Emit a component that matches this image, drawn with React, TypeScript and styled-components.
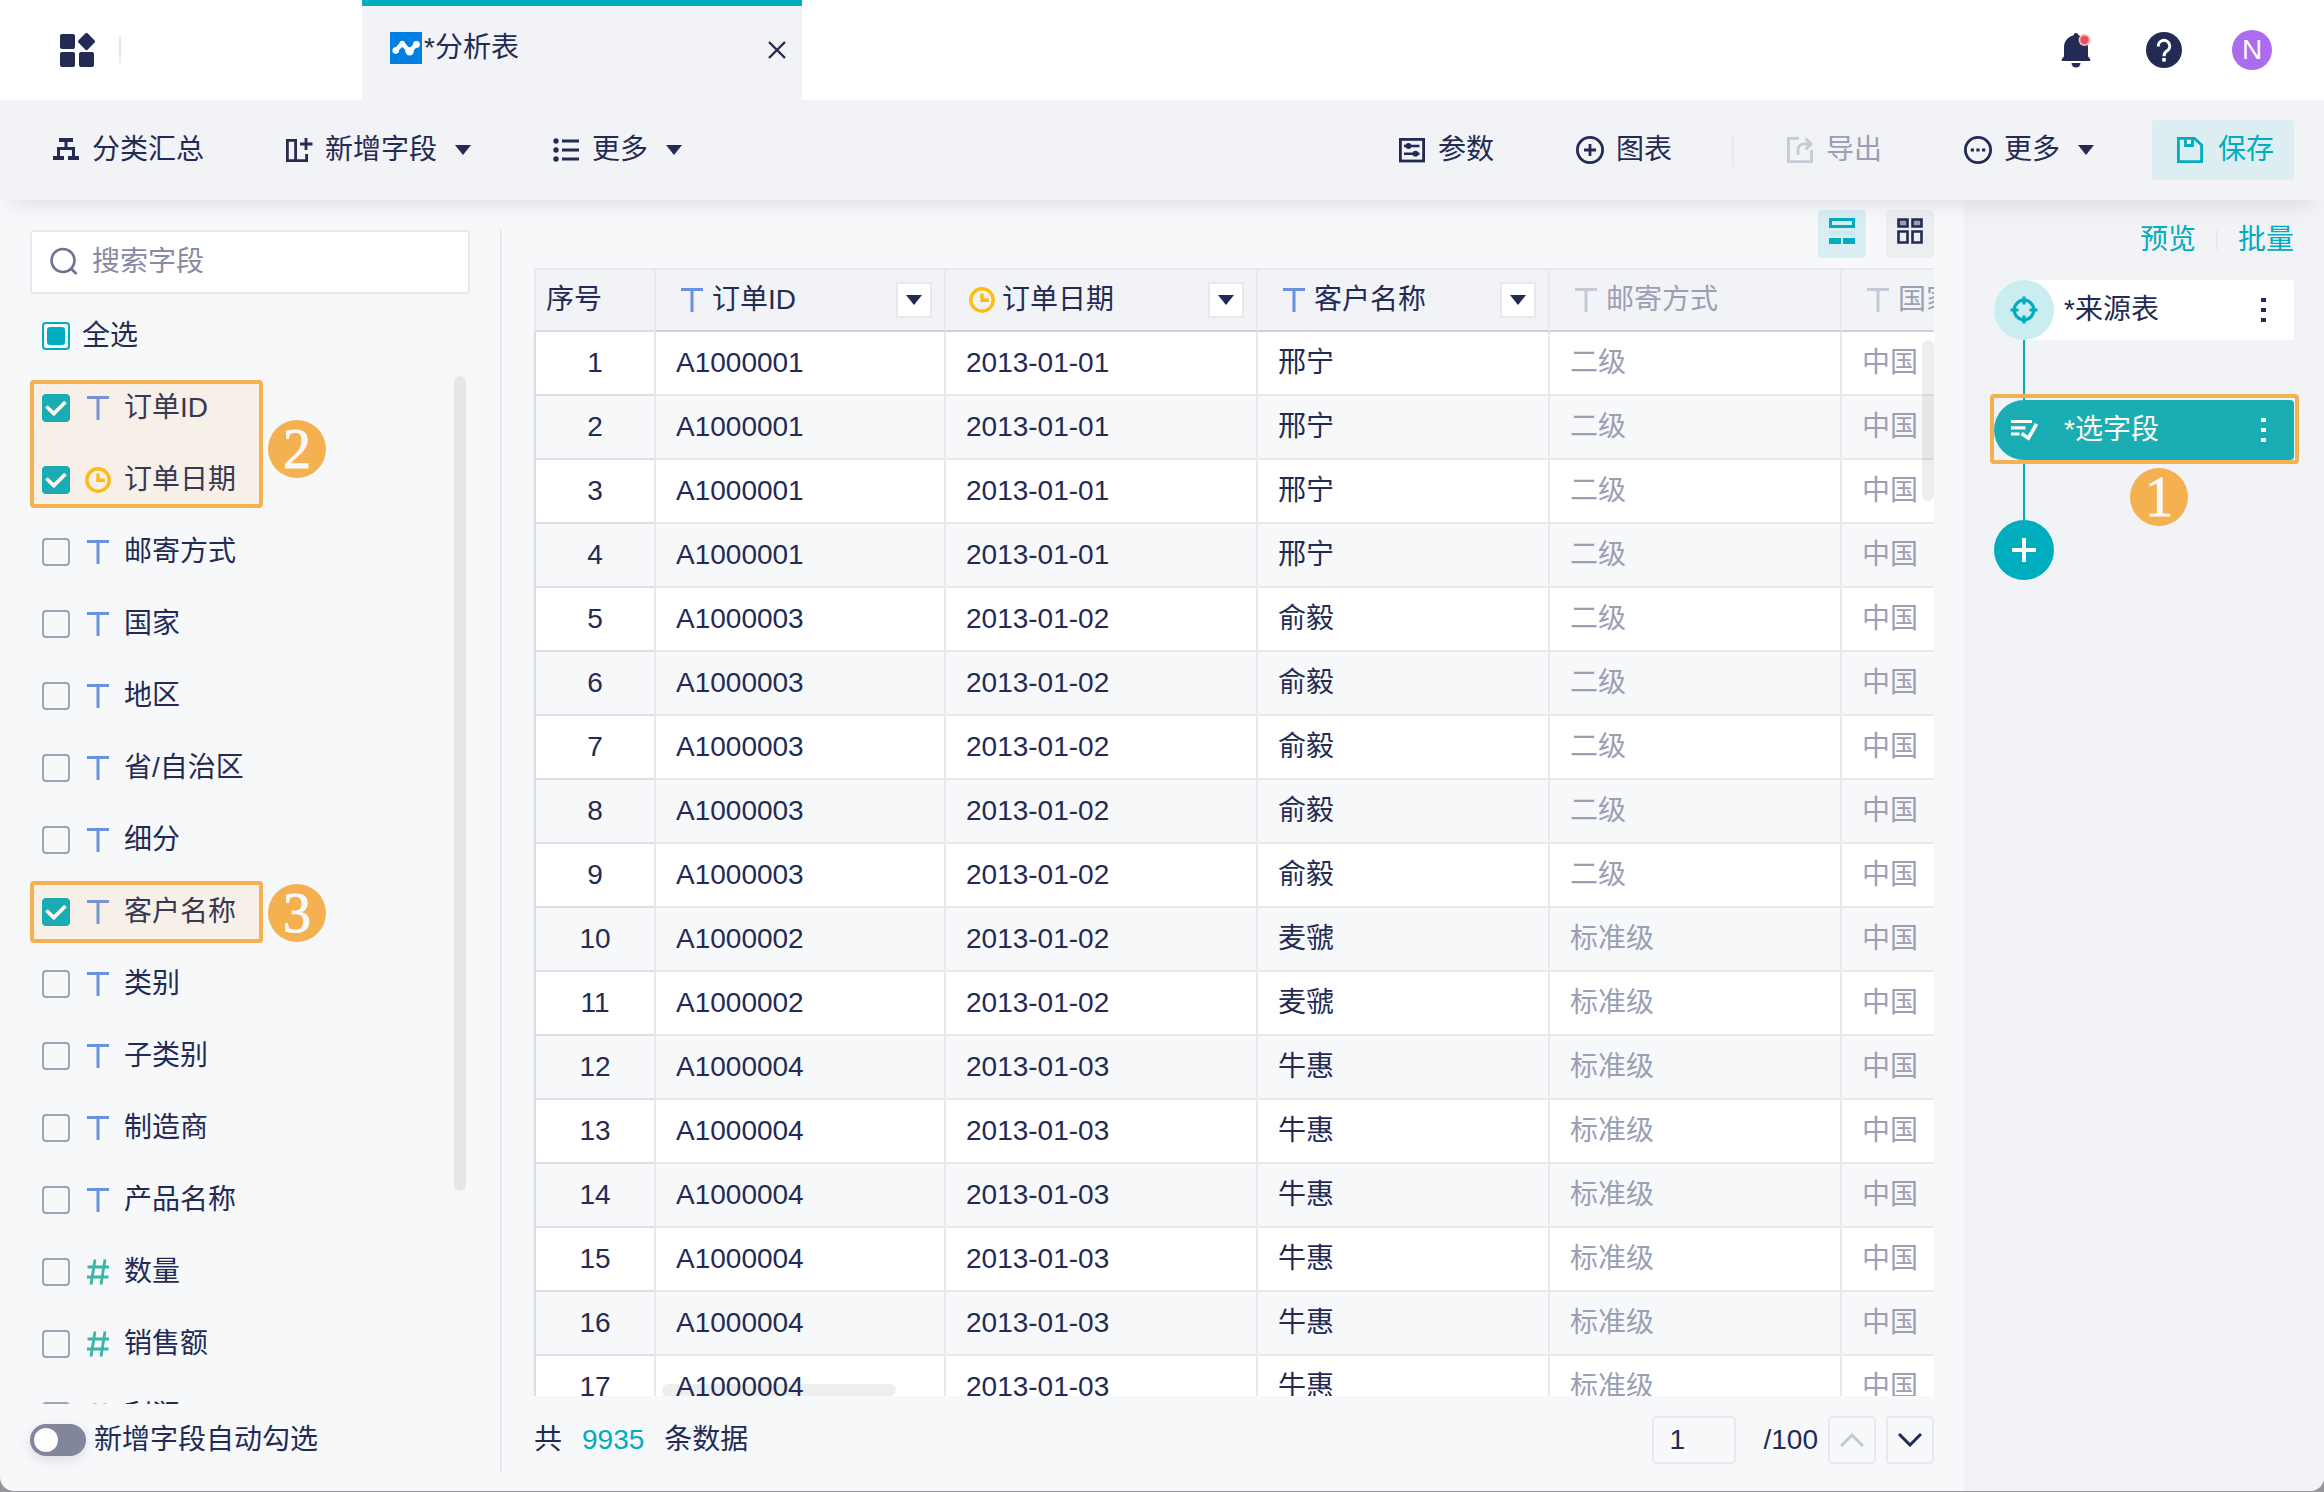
import React, { useEffect, useRef } from "react";
import styled, { createGlobalStyle, css } from "styled-components";

const color = {
  ink: "#232b54",
  muted: "#9b9fb3",
  faint: "#c6c9d6",
  teal: "#00adbf",
  tealMarked: "#1aaeb4",
  line: "#e8e9ed",
  lineIndex: "#dcdee6",
  lineHead: "#cfd1da",
  page: "#f7f8fa",
  panel: "#f2f3f7",
  blue: "#6a90e0",
  green: "#38b5a6",
  yellow: "#fdbd10",
  mark: "#f5b04f",
};

const GlobalStyle = createGlobalStyle`
  *, *::before, *::after { box-sizing: border-box; }
  html, body { margin: 0; background: #949699; }
  body, button, input, table {
    font-family: "Liberation Sans", "Noto Sans CJK SC", sans-serif;
    font-size: 28px;
    line-height: 40px;
    color: ${color.ink};
  }
  button { margin: 0; padding: 0; border: 0; background: none; cursor: pointer; }
  svg { display: block; flex: none; }
`;

const Window = styled.div`
  display: flex;
  flex-direction: column;
  height: calc(100vh - 1px);
  overflow: hidden;
  border-radius: 0 0 14px 14px;
  background: ${color.page};
`;

/* ---------- header ---------- */

const Header = styled.header`
  display: flex;
  flex: none;
  height: 100px;
  background: #fff;
`;

const HeaderStart = styled.div`
  display: flex;
  align-items: center;
  gap: 23px;
  width: 362px;
  padding-left: 60px;
`;

const Rule = styled.span<{ $height: number }>`
  flex: none;
  width: 2px;
  height: ${(p) => p.$height}px;
  background: ${color.line};
`;

const Tab = styled.div`
  display: flex;
  align-items: center;
  justify-content: space-between;
  width: 440px;
  padding: 0 16px 0 28px;
  background: ${color.panel};
  box-shadow: inset 0 6px 0 ${color.teal};
`;

const TabTitle = styled.div`
  display: flex;
  align-items: center;
  gap: 2px;
  padding-bottom: 4px;
`;

const HeaderEnd = styled.div`
  display: flex;
  align-items: center;
  gap: 48px;
  margin-left: auto;
  padding-right: 52px;
`;

const RoundButton = styled.button<{ $fill?: string }>`
  display: grid;
  place-items: center;
  width: 40px;
  height: 40px;
  border-radius: 50%;
  background: ${(p) => p.$fill ?? "transparent"};
  color: #fff;
`;

/* ---------- toolbar ---------- */

const Toolbar = styled.div`
  position: relative;
  z-index: 2;
  display: flex;
  flex: none;
  align-items: center;
  justify-content: space-between;
  height: 100px;
  padding: 0 30px 0 52px;
  background: ${color.panel};
  box-shadow: 0 12px 24px -12px rgba(35, 43, 84, 0.16);
`;

const ToolGroup = styled.div<{ $gap: number }>`
  display: flex;
  align-items: center;
  gap: ${(p) => p.$gap}px;
`;

const ToolbarEnd = styled.div`
  display: flex;
  align-items: center;
`;

const ToolButton = styled.button`
  display: flex;
  align-items: center;
  gap: 12px;
  white-space: nowrap;
  &:disabled { color: ${color.muted}; }
`;

const SaveButton = styled(ToolButton)`
  height: 60px;
  margin-left: 58px;
  padding: 0 20px 0 24px;
  gap: 14px;
  border-radius: 4px;
  background: #ddeef3;
  color: ${color.teal};
`;

const ToolRule = styled(Rule)`
  margin: 0 52px 0 60px;
`;

const Caret = styled.span<{ $lead?: boolean }>`
  width: 0;
  height: 0;
  margin-left: ${(p) => (p.$lead ? 6 : 0)}px;
  border: solid transparent;
  border-width: 10px 8px 0;
  border-top-color: ${color.ink};
`;

/* ---------- body ---------- */

const Body = styled.div`
  display: flex;
  flex: 1;
  min-height: 0;
`;

const Sidebar = styled.aside`
  display: flex;
  flex: none;
  flex-direction: column;
  width: 500px;
  padding: 30px 0 15px;
`;

const Search = styled.label`
  display: flex;
  flex: none;
  align-items: center;
  gap: 12px;
  height: 64px;
  margin: 0 30px;
  padding: 0 18px;
  border: 2px solid ${color.line};
  border-radius: 4px;
  background: #fff;
`;

const SearchInput = styled.input`
  flex: 1;
  min-width: 0;
  padding: 0;
  border: 0;
  outline: 0;
  background: none;
  &::placeholder { color: #868ba3; opacity: 1; }
`;

const FieldRow = styled.label`
  display: flex;
  flex: none;
  align-items: center;
  height: 72px;
  padding-left: 42px;
  white-space: nowrap;
`;

const SelectAllRow = styled(FieldRow)`
  gap: 12px;
  margin-top: 6px;
`;

const FieldName = styled.span`
  margin-left: 12px;
`;

const TypeSlot = styled.span`
  display: grid;
  place-items: center;
  flex: none;
  width: 28px;
  height: 28px;
`;

const RowTypeSlot = styled(TypeSlot)`
  margin-left: 14px;
`;

const TickWrap = styled.span`
  display: grid;
  flex: none;
  & > * { grid-area: 1 / 1; }
  & > svg { pointer-events: none; }
`;

const Tick = styled.input`
  appearance: none;
  width: 28px;
  height: 28px;
  margin: 0;
  border: 2px solid #9ea4b5;
  border-radius: 4px;
  &:checked { border-color: ${color.teal}; background: ${color.teal}; }
  &:indeterminate { border-color: ${color.teal}; background: none; }
`;

const FieldList = styled.div`
  position: relative;
  flex: 1;
  min-height: 0;
  overflow: hidden;
`;

const MarkedRows = styled.div<{ $inset: number }>`
  position: relative;
  &::after {
    content: "";
    position: absolute;
    left: 30px;
    width: 233px;
    top: ${(p) => p.$inset}px;
    bottom: ${(p) => p.$inset}px;
    border: 4px solid ${color.mark};
    border-radius: 4px;
    background: rgba(245, 176, 79, 0.1);
    pointer-events: none;
  }
`;

const Badge = styled.span`
  position: absolute;
  display: grid;
  place-items: center;
  width: 58px;
  height: 58px;
  border-radius: 50%;
  background: ${color.mark};
  color: ${color.page};
  font-family: "Liberation Serif", serif;
  font-size: 56px;
  line-height: 58px;
  -webkit-text-stroke: 1px ${color.page};
`;

const ListBadge = styled(Badge)<{ $top: number }>`
  left: 268px;
  top: ${(p) => p.$top}px;
`;

const NodeBadge = styled(Badge)`
  left: 136px;
  top: 68px;
`;

const Thumb = styled.span`
  position: absolute;
  border-radius: 6px;
  background: rgba(30, 34, 40, 0.08);
`;

const ListThumb = styled(Thumb)`
  top: 4px;
  right: 34px;
  width: 12px;
  height: 79%;
`;

const AutoRow = styled.label`
  display: flex;
  flex: none;
  align-items: center;
  gap: 8px;
  height: 72px;
  padding-left: 30px;
`;

const Switch = styled.input`
  appearance: none;
  display: flex;
  align-items: center;
  width: 56px;
  height: 32px;
  margin: 0;
  padding: 4px;
  border-radius: 16px;
  background: #82869d;
  box-shadow: 0 4px 12px rgba(35, 43, 84, 0.12);
  &::before {
    content: "";
    width: 24px;
    height: 24px;
    border-radius: 50%;
    background: #fff;
  }
`;

const SideRule = styled.span`
  flex: none;
  width: 2px;
  margin: 30px 0 18px;
  background: ${color.line};
`;

/* ---------- table ---------- */

const Main = styled.main`
  display: flex;
  flex: 1;
  flex-direction: column;
  min-width: 0;
  padding: 10px 30px 27px 32px;
`;

const ViewBar = styled.div`
  display: flex;
  flex: none;
  justify-content: flex-end;
  gap: 20px;
  margin-bottom: 10px;
`;

const ViewButton = styled.button<{ $on?: boolean }>`
  display: flex;
  justify-content: center;
  width: 48px;
  height: 48px;
  padding-top: 8px;
  border-radius: 4px;
  background: ${(p) => (p.$on ? "#d9eef3" : "#edeef2")};
`;

const TableArea = styled.div`
  position: relative;
  flex: 1;
  min-height: 0;
  overflow: hidden;
`;

const Table = styled.table`
  width: 1600px;
  table-layout: fixed;
  border-collapse: separate;
  border-spacing: 0;
`;

const cell = css`
  height: 64px;
  padding: 0 20px;
  border-right: 2px solid ${color.line};
  border-bottom: 2px solid ${color.line};
  text-align: left;
  font-weight: 400;
  white-space: nowrap;
`;

const HeadCell = styled.th<{ $index?: boolean; $dim?: boolean }>`
  ${cell}
  padding: ${(p) => (p.$index ? "0 10px" : "0 12px 0 22px")};
  border-top: 2px solid ${color.line};
  border-bottom-color: ${(p) => (p.$index ? color.lineIndex : color.lineHead)};
  ${(p) => p.$index && css`border-left: 2px solid ${color.line};`}
  background: ${color.panel};
  color: ${(p) => (p.$dim ? color.muted : color.ink)};
`;

const HeadContent = styled.div`
  display: flex;
  align-items: center;
  gap: 6px;
`;

const FilterButton = styled.button`
  display: grid;
  place-items: center;
  width: 36px;
  height: 36px;
  margin-left: auto;
  border: 2px solid ${color.line};
  background: #fff;
`;

const Row = styled.tr`
  background: #fff;
  &:nth-child(even) { background: ${color.page}; }
`;

const Cell = styled.td<{ $dim?: boolean }>`
  ${cell}
  color: ${(p) => (p.$dim ? color.muted : color.ink)};
`;

const IndexCell = styled.th`
  ${cell}
  border-left: 2px solid ${color.lineIndex};
  border-bottom-color: ${color.lineIndex};
  text-align: center;
`;

const TableThumbY = styled(Thumb)`
  top: 72px;
  right: 0;
  width: 12px;
  height: 161px;
`;

const TableThumbX = styled(Thumb)`
  left: 128px;
  bottom: 0;
  width: 234px;
  height: 12px;
`;

const Footer = styled.footer`
  display: flex;
  flex: none;
  align-items: center;
  justify-content: space-between;
  margin-top: 20px;
`;

const Count = styled.p`
  display: flex;
  gap: 20px;
  margin: 0;
`;

const CountValue = styled.span`
  color: ${color.teal};
`;

const Pager = styled.div`
  display: flex;
  align-items: center;
  gap: 10px;
`;

const PageInput = styled.input`
  width: 84px;
  height: 48px;
  margin-right: 18px;
  padding: 0 16px;
  border: 2px solid ${color.line};
  border-radius: 4px;
  background: none;
`;

const PageButton = styled.button`
  display: grid;
  place-items: center;
  width: 48px;
  height: 48px;
  border: 2px solid ${color.line};
  border-radius: 4px;
`;

/* ---------- steps ---------- */

const Steps = styled.aside`
  flex: none;
  width: 360px;
  padding: 18px 30px 0;
  background: ${color.panel};
`;

const StepLinks = styled.div`
  display: flex;
  align-items: center;
  justify-content: flex-end;
  gap: 20px;
  height: 44px;
  margin-bottom: 18px;
`;

const LinkButton = styled.button`
  color: ${color.teal};
`;

const Step = styled.div<{ $active?: boolean }>`
  position: relative;
  display: flex;
  align-items: center;
  height: 60px;
  padding-right: 20px;
  border-radius: 30px 4px 4px 30px;
  background: ${(p) => (p.$active ? color.tealMarked : "#fff")};
  color: ${(p) => (p.$active ? "#fffaf0" : color.ink)};
`;

const StepMark = styled.span`
  position: absolute;
  inset: -6px -5px -4px -4px;
  border: 4px solid ${color.mark};
  border-radius: 4px;
  pointer-events: none;
`;

const StepIcon = styled.span<{ $fill?: string }>`
  display: grid;
  place-items: center;
  flex: none;
  width: 60px;
  height: 60px;
  margin-right: 10px;
  border-radius: 50%;
  background: ${(p) => p.$fill ?? "transparent"};
`;

const StepMenu = styled.button`
  display: grid;
  place-items: center;
  width: 20px;
  height: 40px;
  margin-left: auto;
  color: inherit;
`;

const Connector = styled.span`
  display: block;
  width: 2px;
  height: 60px;
  margin-left: 29px;
  background: ${color.teal};
`;

const AddStep = styled(RoundButton)`
  width: 60px;
  height: 60px;
`;

/* ---------- icons ---------- */

const AppsIcon = () => (
  <svg width="36" height="36" viewBox="0 0 36 36" fill={color.ink}>
    <rect x="0" y="2" width="15" height="15" rx="2" />
    <rect x="0" y="20" width="15" height="15" rx="2" />
    <rect x="19" y="20" width="15" height="15" rx="2" />
    <rect x="20" y="3" width="13" height="13" rx="1.5" transform="rotate(45 26.5 9.5)" />
  </svg>
);

const AnalysisLogo = () => (
  <svg width="32" height="32" viewBox="0 0 32 32">
    <rect width="32" height="32" fill="#0080e3" />
    <path d="M5.7 18.5 12.3 11.5 19.5 19.5 26.3 12.5" fill="none" stroke="#fff" strokeWidth="4.4" strokeLinejoin="round" />
    <g fill="#fff">
      <circle cx="5.7" cy="18.6" r="3.3" />
      <circle cx="12.3" cy="11.6" r="2.8" />
      <circle cx="19.6" cy="19.2" r="4.2" />
      <circle cx="26.4" cy="12.4" r="3.4" />
    </g>
  </svg>
);

const CloseIcon = () => (
  <svg width="18" height="18" viewBox="0 0 18 18" fill="none" stroke={color.ink} strokeWidth="2.4">
    <path d="M1 1 17 17M17 1 1 17" />
  </svg>
);

const BellIcon = () => (
  <svg width="30" height="36" viewBox="0 0 30 36">
    <path
      d="M15 1a2.4 2.4 0 0 1 2.4 2.3C23.5 5 27 9.5 27 15.5V24.5L29.2 27V29H.8V27L3 24.5V15.5C3 9.5 6.5 5 12.6 3.3A2.4 2.4 0 0 1 15 1Z"
      fill={color.ink}
    />
    <path d="M10.5 31H19.5A4.5 4.5 0 0 1 10.5 31Z" fill={color.ink} />
    <circle cx="23.5" cy="8" r="6" fill="#f7b9bb" />
    <circle cx="23.5" cy="8" r="4.2" fill="#ea5055" />
  </svg>
);

const HelpIcon = () => (
  <svg width="36" height="36" viewBox="0 0 36 36">
    <circle cx="18" cy="18" r="18" fill={color.ink} />
    <path d="M12.3 14.5A5.7 5.7 0 1 1 20.8 19C18.9 20.3 18 21.2 18 24.2" fill="none" stroke="#fff" strokeWidth="3" />
    <rect x="16.2" y="26" width="3.6" height="3.6" fill="#fff" />
  </svg>
);

const ToolIcon = ({ children, tint = color.ink }: { children: React.ReactNode; tint?: string }) => (
  <svg width="28" height="28" viewBox="0 0 28 28" fill="none" stroke={tint} strokeWidth="2.8">
    {children}
  </svg>
);

const SummaryIcon = () => (
  <svg width="28" height="28" viewBox="0 0 28 28" fill={color.ink}>
    <path d="M7 2H21V6H15.5V11H23V20H27V24H16V20H20V14H8V20H12V24H1V20H5V11H12.5V6H7Z" />
  </svg>
);

const AddFieldIcon = () => (
  <ToolIcon>
    <path d="M2.4 4.4H10.6V24.6H2.4ZM10.6 24.6H21.6V18M21 2V14M15 8H27.5" />
  </ToolIcon>
);

const ListIcon = () => (
  <ToolIcon>
    <path d="M10 5H27M10 14H27M10 23H27" />
    <g fill={color.ink} stroke="none">
      <circle cx="4" cy="5" r="2.7" />
      <circle cx="4" cy="14" r="2.7" />
      <circle cx="4" cy="23" r="2.7" />
    </g>
  </ToolIcon>
);

const ParamsIcon = () => (
  <ToolIcon>
    <rect x="2.4" y="3.4" width="23.2" height="21.6" />
    <path d="M6 10H21.5M6 17.7H21.5" strokeWidth="2.4" />
    <g fill={color.ink} stroke="none">
      <circle cx="10.5" cy="10" r="2.9" />
      <circle cx="17.5" cy="17.7" r="2.9" />
    </g>
  </ToolIcon>
);

const ChartIcon = () => (
  <ToolIcon>
    <circle cx="14" cy="14" r="12.6" />
    <path d="M14 8V20M8 14H20" />
  </ToolIcon>
);

const ExportIcon = () => (
  <ToolIcon tint={color.faint}>
    <path d="M13 2.4H2.4V25.6H25.6V14M12 19V14.5Q12 8 18 8H25M19.5 2.5 25.2 8 19.5 13.5" />
  </ToolIcon>
);

const MoreIcon = () => (
  <ToolIcon>
    <circle cx="14" cy="14" r="12.6" />
    <path d="M6.8 14H10M12.4 14H15.6M18 14H21.2" strokeWidth="3.2" />
  </ToolIcon>
);

const SaveIcon = () => (
  <ToolIcon tint={color.teal}>
    <path d="M2.4 2.4H18.5L25.6 9V25.6H2.4Z" />
    <path d="M9.5 2.4V9.5H16.5V2.4" />
  </ToolIcon>
);

const SearchIcon = () => (
  <svg width="30" height="30" viewBox="0 0 30 30" fill="none" stroke="#6d7390" strokeWidth="2.6">
    <circle cx="13" cy="13.5" r="11.5" />
    <path d="M20.5 21 26.5 27" />
  </svg>
);

const CheckMark = () => (
  <svg width="28" height="28" viewBox="0 0 28 28" fill="none" stroke="#fff" strokeWidth="3.8">
    <path d="M4.5 12.5 11.8 19.5 23.5 8" />
  </svg>
);

const PartialMark = () => (
  <svg width="28" height="28" viewBox="0 0 28 28">
    <rect x="5" y="5" width="18" height="18" rx="3" fill={color.teal} />
  </svg>
);

const TextTypeIcon = ({ dim }: { dim?: boolean }) => (
  <svg width="22" height="24" viewBox="0 0 22 24" fill={dim ? color.faint : color.blue}>
    <path d="M0 0H22V3H12.5V24H9.5V3H0Z" />
  </svg>
);

const DateTypeIcon = () => (
  <svg width="26" height="26" viewBox="0 0 26 26" fill="none" stroke={color.yellow} strokeWidth="3.4">
    <circle cx="13" cy="13" r="11.2" />
    <path d="M13 6.5V13.2H20" />
  </svg>
);

const NumberTypeIcon = () => (
  <svg width="24" height="26" viewBox="0 0 24 26" fill="none" stroke={color.green} strokeWidth="2.8">
    <path d="M1.5 8H23M1 18H22.5M9 .5 5 25.5M19 .5 15 25.5" />
  </svg>
);

const RowsViewIcon = () => (
  <svg width="26" height="26" viewBox="0 0 26 26">
    <rect x="1.5" y="1.5" width="23" height="7" fill="none" stroke={color.teal} strokeWidth="3" />
    <path d="M0 13H12V17H0ZM14 13H26V17H14Z" fill="#c5ebf0" />
    <path d="M0 20H12V26H0ZM14 20H26V26H14Z" fill={color.teal} />
  </svg>
);

const GridViewIcon = () => (
  <svg width="26" height="26" viewBox="0 0 26 26" fill="none" stroke={color.ink} strokeWidth="2.6">
    <path d="M1.5 1.5H10.5V8.5H1.5ZM15.5 1.5H24.5V8.5H15.5Z" fill="#9a9fb4" />
    <path d="M1.5 13.5H10.5V24.5H1.5ZM15.5 13.5H24.5V24.5H15.5Z" />
  </svg>
);

const TargetIcon = () => (
  <svg width="28" height="28" viewBox="0 0 28 28" fill="none" stroke={color.teal} strokeWidth="3.2">
    <circle cx="14" cy="14" r="9.8" />
    <path d="M14 .5V8.5M14 19.5V27.5M.5 14H8.5M19.5 14H27.5" />
  </svg>
);

const PickIcon = () => (
  <svg width="28" height="22" viewBox="0 0 28 22" fill="none" stroke="#fffaf0" strokeWidth="3.2">
    <path d="M1 2.5H22M1 8.8H15.5M1 15H9.5" />
    <path d="M11.5 14.5 18.5 19.2 26.5 5" strokeWidth="3.6" />
  </svg>
);

const DotsIcon = () => (
  <svg width="6" height="26" viewBox="0 0 6 26" fill="currentColor">
    <path d="M0 1H5V5H0ZM0 11H5V15H0ZM0 21H5V25H0Z" />
  </svg>
);

const PlusIcon = () => (
  <svg width="26" height="26" viewBox="0 0 26 26" fill="none" stroke="#fff" strokeWidth="4">
    <path d="M13 1V25M1 13H25" />
  </svg>
);

const ChevronIcon = ({ up }: { up?: boolean }) => (
  <svg width="24" height="14" viewBox="0 0 24 14" fill="none" stroke={up ? color.faint : color.ink} strokeWidth="3">
    <path d={up ? "M1 13 12 2 23 13" : "M1 1 12 12 23 1"} />
  </svg>
);

/* ---------- data ---------- */

type FieldType = "text" | "date" | "number";
type Field = { name: string; type: FieldType; on?: boolean };

const pickedFirst: Field[] = [
  { name: "订单ID", type: "text", on: true },
  { name: "订单日期", type: "date", on: true },
];
const middle: Field[] = ["邮寄方式", "国家", "地区", "省/自治区", "细分"].map((name) => ({ name, type: "text" }));
const pickedLast: Field[] = [{ name: "客户名称", type: "text", on: true }];
const rest: Field[] = [
  { name: "类别", type: "text" },
  { name: "子类别", type: "text" },
  { name: "制造商", type: "text" },
  { name: "产品名称", type: "text" },
  { name: "数量", type: "number" },
  { name: "销售额", type: "number" },
  { name: "利润", type: "number" },
];

const columns = [
  { name: "订单ID", type: "text" as FieldType, width: 290 },
  { name: "订单日期", type: "date" as FieldType, width: 312 },
  { name: "客户名称", type: "text" as FieldType, width: 292 },
  { name: "邮寄方式", type: "text" as FieldType, width: 292, dim: true },
  { name: "国家", type: "text" as FieldType, width: 292, dim: true },
];

const orders = [
  { count: 4, id: "A1000001", date: "2013-01-01", customer: "邢宁", ship: "二级" },
  { count: 5, id: "A1000003", date: "2013-01-02", customer: "俞毅", ship: "二级" },
  { count: 2, id: "A1000002", date: "2013-01-02", customer: "麦虢", ship: "标准级" },
  { count: 6, id: "A1000004", date: "2013-01-03", customer: "牛惠", ship: "标准级" },
];
const rows = orders.flatMap(({ count, ...order }) => Array.from({ length: count }, () => order));

const TypeIcon = ({ type, dim }: { type: FieldType; dim?: boolean }) => {
  if (type === "date") return <DateTypeIcon />;
  if (type === "number") return <NumberTypeIcon />;
  return <TextTypeIcon dim={dim} />;
};

const FieldItem = ({ field }: { field: Field }) => (
  <FieldRow>
    <TickWrap>
      <Tick type="checkbox" defaultChecked={field.on} />
      {field.on && <CheckMark />}
    </TickWrap>
    <RowTypeSlot>
      <TypeIcon type={field.type} />
    </RowTypeSlot>
    <FieldName>{field.name}</FieldName>
  </FieldRow>
);

const fieldItems = (fields: Field[]) => fields.map((f) => <FieldItem key={f.name} field={f} />);

const SelectAll = () => {
  const box = useRef<HTMLInputElement>(null);
  useEffect(() => {
    if (box.current) box.current.indeterminate = true;
  }, []);
  return (
    <SelectAllRow>
      <TickWrap>
        <Tick type="checkbox" ref={box} />
        <PartialMark />
      </TickWrap>
      全选
    </SelectAllRow>
  );
};

export default function App() {
  return (
    <>
      <GlobalStyle />
      <Window>
        <Header>
          <HeaderStart>
            <AppsIcon />
            <Rule $height={26} />
          </HeaderStart>
          <Tab>
            <TabTitle>
              <AnalysisLogo />
              <span>*分析表</span>
            </TabTitle>
            <button aria-label="关闭"><CloseIcon /></button>
          </Tab>
          <HeaderEnd>
            <RoundButton aria-label="通知"><BellIcon /></RoundButton>
            <RoundButton aria-label="帮助"><HelpIcon /></RoundButton>
            <RoundButton $fill="#ab6cf0">N</RoundButton>
          </HeaderEnd>
        </Header>

        <Toolbar>
          <ToolGroup $gap={81}>
            <ToolButton><SummaryIcon />分类汇总</ToolButton>
            <ToolButton><AddFieldIcon />新增字段<Caret $lead /></ToolButton>
            <ToolButton><ListIcon />更多<Caret $lead /></ToolButton>
          </ToolGroup>
          <ToolbarEnd>
            <ToolGroup $gap={82}>
              <ToolButton><ParamsIcon />参数</ToolButton>
              <ToolButton><ChartIcon />图表</ToolButton>
            </ToolGroup>
            <ToolRule $height={32} />
            <ToolGroup $gap={82}>
              <ToolButton disabled><ExportIcon />导出</ToolButton>
              <ToolButton><MoreIcon />更多<Caret $lead /></ToolButton>
            </ToolGroup>
            <SaveButton><SaveIcon />保存</SaveButton>
          </ToolbarEnd>
        </Toolbar>

        <Body>
          <Sidebar>
            <Search>
              <SearchIcon />
              <SearchInput type="text" placeholder="搜索字段" aria-label="搜索字段" />
            </Search>
            <SelectAll />
            <FieldList>
              <MarkedRows $inset={8}>
                {fieldItems(pickedFirst)}
                <ListBadge $top={48}>2</ListBadge>
              </MarkedRows>
              {fieldItems(middle)}
              <MarkedRows $inset={5}>
                {fieldItems(pickedLast)}
                <ListBadge $top={8}>3</ListBadge>
              </MarkedRows>
              {fieldItems(rest)}
              <ListThumb />
            </FieldList>
            <AutoRow>
              <Switch type="checkbox" />
              新增字段自动勾选
            </AutoRow>
          </Sidebar>
          <SideRule />

          <Main>
            <ViewBar>
              <ViewButton $on aria-label="列表视图"><RowsViewIcon /></ViewButton>
              <ViewButton aria-label="网格视图"><GridViewIcon /></ViewButton>
            </ViewBar>
            <TableArea>
              <Table>
                <colgroup>
                  <col width={122} />
                  {columns.map((c) => <col key={c.name} width={c.width} />)}
                </colgroup>
                <thead>
                  <tr>
                    <HeadCell $index>序号</HeadCell>
                    {columns.map((c) => (
                      <HeadCell key={c.name} $dim={c.dim}>
                        <HeadContent>
                          <TypeSlot><TypeIcon type={c.type} dim={c.dim} /></TypeSlot>
                          {c.name}
                          {!c.dim && (
                            <FilterButton aria-label={`筛选${c.name}`}><Caret /></FilterButton>
                          )}
                        </HeadContent>
                      </HeadCell>
                    ))}
                  </tr>
                </thead>
                <tbody>
                  {rows.map((r, i) => (
                    <Row key={i}>
                      <IndexCell scope="row">{i + 1}</IndexCell>
                      <Cell>{r.id}</Cell>
                      <Cell>{r.date}</Cell>
                      <Cell>{r.customer}</Cell>
                      <Cell $dim>{r.ship}</Cell>
                      <Cell $dim>中国</Cell>
                    </Row>
                  ))}
                </tbody>
              </Table>
              <TableThumbY />
              <TableThumbX />
            </TableArea>
            <Footer>
              <Count>
                <span>共</span>
                <CountValue>9935</CountValue>
                <span>条数据</span>
              </Count>
              <Pager>
                <PageInput type="text" defaultValue="1" aria-label="页码" />
                <span>/100</span>
                <PageButton disabled aria-label="上一页"><ChevronIcon up /></PageButton>
                <PageButton aria-label="下一页"><ChevronIcon /></PageButton>
              </Pager>
            </Footer>
          </Main>

          <Steps>
            <StepLinks>
              <LinkButton>预览</LinkButton>
              <Rule $height={20} />
              <LinkButton>批量</LinkButton>
            </StepLinks>
            <Step>
              <StepIcon $fill="#caedf2"><TargetIcon /></StepIcon>
              *来源表
              <StepMenu aria-label="来源表菜单"><DotsIcon /></StepMenu>
            </Step>
            <Connector />
            <Step $active>
              <StepIcon><PickIcon /></StepIcon>
              *选字段
              <StepMenu aria-label="选字段菜单"><DotsIcon /></StepMenu>
              <StepMark />
              <NodeBadge>1</NodeBadge>
            </Step>
            <Connector />
            <AddStep $fill={color.teal} aria-label="添加步骤"><PlusIcon /></AddStep>
          </Steps>
        </Body>
      </Window>
    </>
  );
}
